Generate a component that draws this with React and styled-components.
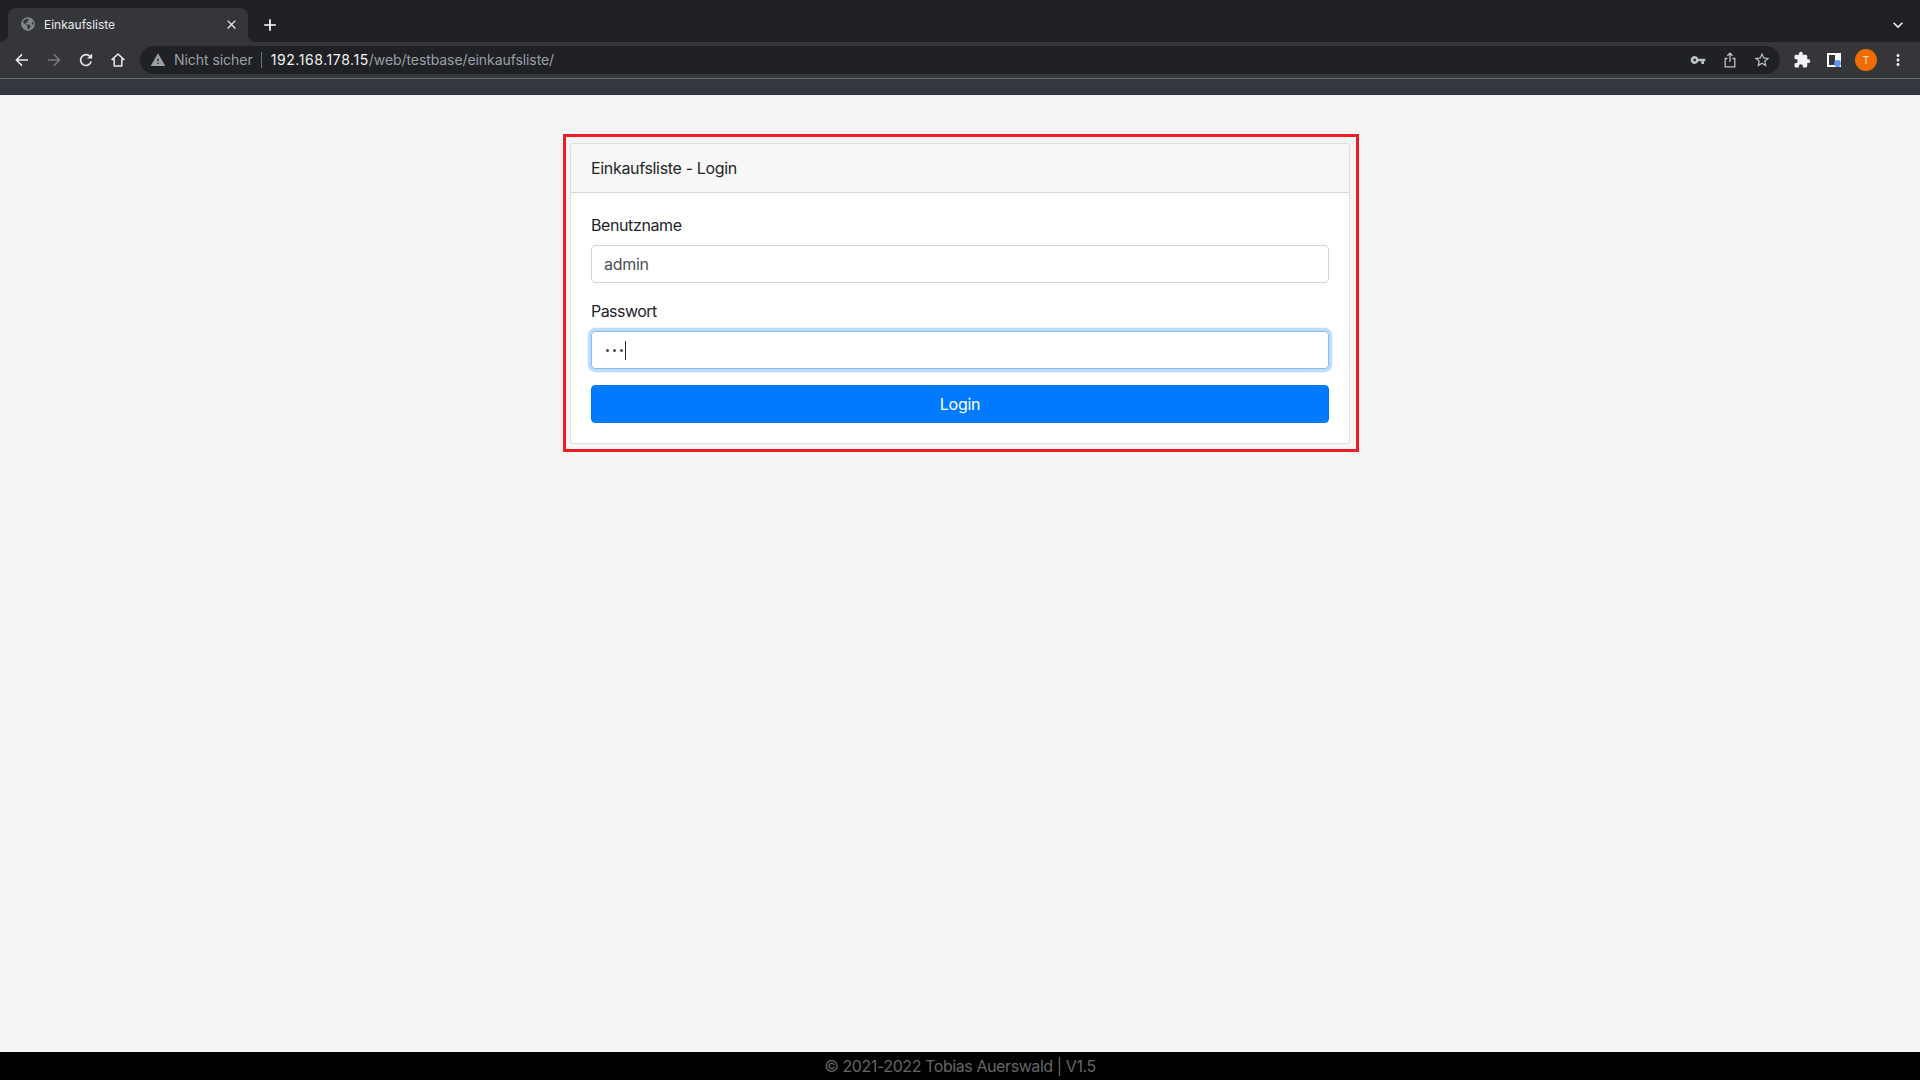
import React from "react";
import styled, { createGlobalStyle } from "styled-components";
import { MdVpnKey, MdExtension, MdStarBorder, MdWarning, MdClose, MdAdd, MdKeyboardArrowDown, MdMoreVert } from "react-icons/md";
import { FaGlobeAmericas } from "react-icons/fa";

const Global = createGlobalStyle`
  html, body { margin: 0; padding: 0; height: 100%; }
  * { box-sizing: border-box; }
  body { font-family: Inter, "Liberation Sans", sans-serif; background: #f5f5f5; color: #212529; }
`;

const Screen = styled.div`
  height: 1080px;
  display: flex;
  flex-direction: column;
  overflow: hidden;
`;

/* Browser chrome */
const TabStrip = styled.div`
  height: 42px;
  background: #202124;
  display: flex;
  align-items: flex-end;
  padding: 0 8px;
`;
const Tab = styled.div`
  position: relative;
  width: 240px;
  height: 34px;
  background: #35363a;
  border-radius: 8px 8px 0 0;
  display: flex;
  align-items: center;
  padding: 0 9px 2px 13px;
  color: #e8eaed;
  font-size: 12px;
  &::before, &::after {
    content: "";
    position: absolute;
    bottom: 0;
    width: 8px;
    height: 8px;
  }
  &::before { left: -8px; background: radial-gradient(circle at 0 0, transparent 8px, #35363a 8.5px); }
  &::after { right: -8px; background: radial-gradient(circle at 100% 0, transparent 8px, #35363a 8.5px); }
`;
const TabTitle = styled.span`
  margin-left: 9px;
  flex: 1;
`;
const TabClose = styled.span`
  display: flex;
  color: #e8eaed;
`;
const NewTab = styled.span`
  width: 28px;
  height: 34px;
  margin-left: 8px;
  display: flex;
  align-items: center;
  justify-content: center;
  color: #fff;
`;
const TabMenu = styled.span`
  margin-left: auto;
  width: 28px;
  height: 34px;
  display: flex;
  align-items: center;
  justify-content: center;
  color: #e8eaed;
`;
const Toolbar = styled.div`
  height: 37px;
  background: #35363a;
  display: flex;
  align-items: center;
  padding: 0 6px 1px;
  border-bottom: 1px solid #6a6b6e;
`;
const IconSlot = styled.span`
  width: 32px;
  height: 28px;
  flex: none;
  display: flex;
  align-items: center;
  justify-content: center;
  color: ${(p) => p.$color || "#e8eaed"};
`;
const Omnibox = styled.div`
  flex: 1;
  height: 28px;
  margin: 0 6px;
  background: #202124;
  border-radius: 14px;
  display: flex;
  align-items: center;
  padding: 0 2px 0 10px;
  font-size: 14px;
  color: #9aa0a6;
`;
const Security = styled.span`
  margin-left: 8px;
  padding-right: 8px;
  border-right: 1px solid #6f7276;
  line-height: 16px;
  letter-spacing: -0.05px;
`;
const Url = styled.span`
  margin-left: 9px;
  flex: 1;
  letter-spacing: -0.08px;
`;
const Host = styled.span`
  color: #f1f3f4;
  letter-spacing: 0.58px;
`;
const Avatar = styled.span`
  width: 22px;
  height: 22px;
  border-radius: 50%;
  background: #f06c00;
  color: #ffd9bd;
  font-size: 11px;
  display: flex;
  align-items: center;
  justify-content: center;
`;
const BookmarkBand = styled.div`
  height: 16px;
  background: #33373e;
  border-bottom: 1px solid #2c2f34;
`;

/* Page */
const Main = styled.main`
  flex: 1;
  padding-top: 39px;
  display: flex;
  justify-content: center;
  align-items: flex-start;
`;
const Highlight = styled.div`
  border: 3px solid #ed1c24;
  padding: 6px 6px 5px 4px;
  margin-left: 2px;
`;
const Card = styled.section`
  width: 780px;
  background: #fff;
  border: 1px solid rgba(0, 0, 0, 0.125);
  border-radius: 4px;
  overflow: hidden;
`;
const CardHeader = styled.header`
  padding: 12px 20px;
  line-height: 24px;
  font-size: 16px;
  letter-spacing: -0.33px;
  background: #f7f7f7;
  border-bottom: 1px solid rgba(0, 0, 0, 0.125);
`;
const CardBody = styled.form`
  padding: 20px;
`;
const Group = styled.div`
  margin-bottom: 16px;
`;
const Label = styled.label`
  display: block;
  line-height: 24px;
  margin-bottom: 8px;
  font-size: 16px;
  letter-spacing: ${(p) => p.$tracking || "-0.4px"};
`;
const Input = styled.input`
  display: block;
  width: 100%;
  height: 38px;
  padding: 6px 12px;
  font: 16px/24px Inter, "Liberation Sans", sans-serif;
  letter-spacing: -0.3px;
  color: #495057;
  background: #fff;
  border: 1px solid #ced4da;
  border-radius: 4px;
  outline: none;
`;
const FocusedField = styled.div`
  height: 38px;
  padding: 6px 12px;
  display: flex;
  align-items: center;
  color: #495057;
  background: #fff;
  border: 1px solid #80bdff;
  border-radius: 4px;
  box-shadow: 0 0 0 3.2px rgba(0, 123, 255, 0.25);
`;
const Dots = styled.span`
  display: flex;
  gap: 4px;
  margin-left: 2px;
`;
const Dot = styled.i`
  width: 3px;
  height: 3px;
  border-radius: 50%;
  background: #495057;
`;
const Caret = styled.span`
  width: 1px;
  height: 19px;
  margin-left: 2px;
  background: #212529;
`;
const Button = styled.button`
  display: block;
  width: 100%;
  height: 38px;
  background: #007bff;
  color: #fff;
  border: 1px solid #007bff;
  border-radius: 4px;
  font: 16px/24px Inter, "Liberation Sans", sans-serif;
  letter-spacing: -0.3px;
`;
const Footer = styled.footer`
  height: 28px;
  background: #000;
  color: #666;
  text-align: center;
  font-size: 16px;
  line-height: 28px;
  letter-spacing: -0.42px;
`;

/* Drawn icons */
const Line = (p) => <svg width="16" height="16" viewBox="0 0 16 16" fill="none" stroke="currentColor" strokeWidth="1.5" {...p} />;
const Back = () => <Line><path d="M14 8H2.6M8 2.4 2.4 8 8 13.6" /></Line>;
const Forward = () => <Line><path d="M2 8h11.4M8 2.4 13.6 8 8 13.6" /></Line>;
const Reload = () => (
  <svg width="16" height="16" viewBox="0 0 16 16">
    <path d="M13.2 9.6A5.4 5.4 0 1 1 12 4.4" fill="none" stroke="currentColor" strokeWidth="1.6" />
    <path d="M14.2 1.4v5.2H9z" fill="currentColor" />
  </svg>
);
const Home = () => <Line><path d="M8 2 2 7.6h2.2v6.4h7.6V7.6H14z" strokeLinejoin="round" /></Line>;
const Share = () => (
  <Line strokeWidth="1.3">
    <path d="M5.5 6.5H3.2v8.3h9.6V6.5h-2.3" />
    <path d="M8 10V1.4M5.4 3.8 8 1.2l2.6 2.6" />
  </Line>
);
const SidePanel = () => (
  <svg width="16" height="16" viewBox="0 0 16 16">
    <path d="M1 1h14v14H1zM3 3v10h6V3z" fill="#fff" fillRule="evenodd" />
    <circle cx="11.5" cy="11.5" r="3.4" fill="#5f96ee" />
  </svg>
);

export default function App() {
  return (
    <Screen>
      <Global />
      <TabStrip>
        <Tab>
          <FaGlobeAmericas size={14} color="#80868b" />
          <TabTitle>Einkaufsliste</TabTitle>
          <TabClose><MdClose size={15} /></TabClose>
        </Tab>
        <NewTab><MdAdd size={20} /></NewTab>
        <TabMenu><MdKeyboardArrowDown size={20} /></TabMenu>
      </TabStrip>
      <Toolbar>
        <IconSlot><Back /></IconSlot>
        <IconSlot $color="#77797c"><Forward /></IconSlot>
        <IconSlot><Reload /></IconSlot>
        <IconSlot><Home /></IconSlot>
        <Omnibox>
          <MdWarning size={16} color="#9aa0a6" />
          <Security>Nicht sicher</Security>
          <Url><Host>192.168.178.15</Host>/web/testbase/einkaufsliste/</Url>
          <IconSlot $color="#bdc1c6"><MdVpnKey size={16} /></IconSlot>
          <IconSlot $color="#bdc1c6"><Share /></IconSlot>
          <IconSlot $color="#bdc1c6"><MdStarBorder size={18} /></IconSlot>
        </Omnibox>
        <IconSlot $color="#f1f3f4"><MdExtension size={18} /></IconSlot>
        <IconSlot><SidePanel /></IconSlot>
        <IconSlot><Avatar>T</Avatar></IconSlot>
        <IconSlot><MdMoreVert size={18} /></IconSlot>
      </Toolbar>
      <BookmarkBand />
      <Main>
        <Highlight>
          <Card>
            <CardHeader>Einkaufsliste - Login</CardHeader>
            <CardBody onSubmit={(e) => e.preventDefault()}>
              <Group>
                <Label>Benutzname</Label>
                <Input defaultValue="admin" />
              </Group>
              <Group>
                <Label $tracking="-0.55px">Passwort</Label>
                <FocusedField aria-label="Passwort">
                  <Dots><Dot /><Dot /><Dot /></Dots>
                  <Caret />
                </FocusedField>
              </Group>
              <Button type="button">Login</Button>
            </CardBody>
          </Card>
        </Highlight>
      </Main>
      <Footer>© 2021-2022 Tobias Auerswald | V1.5</Footer>
    </Screen>
  );
}
